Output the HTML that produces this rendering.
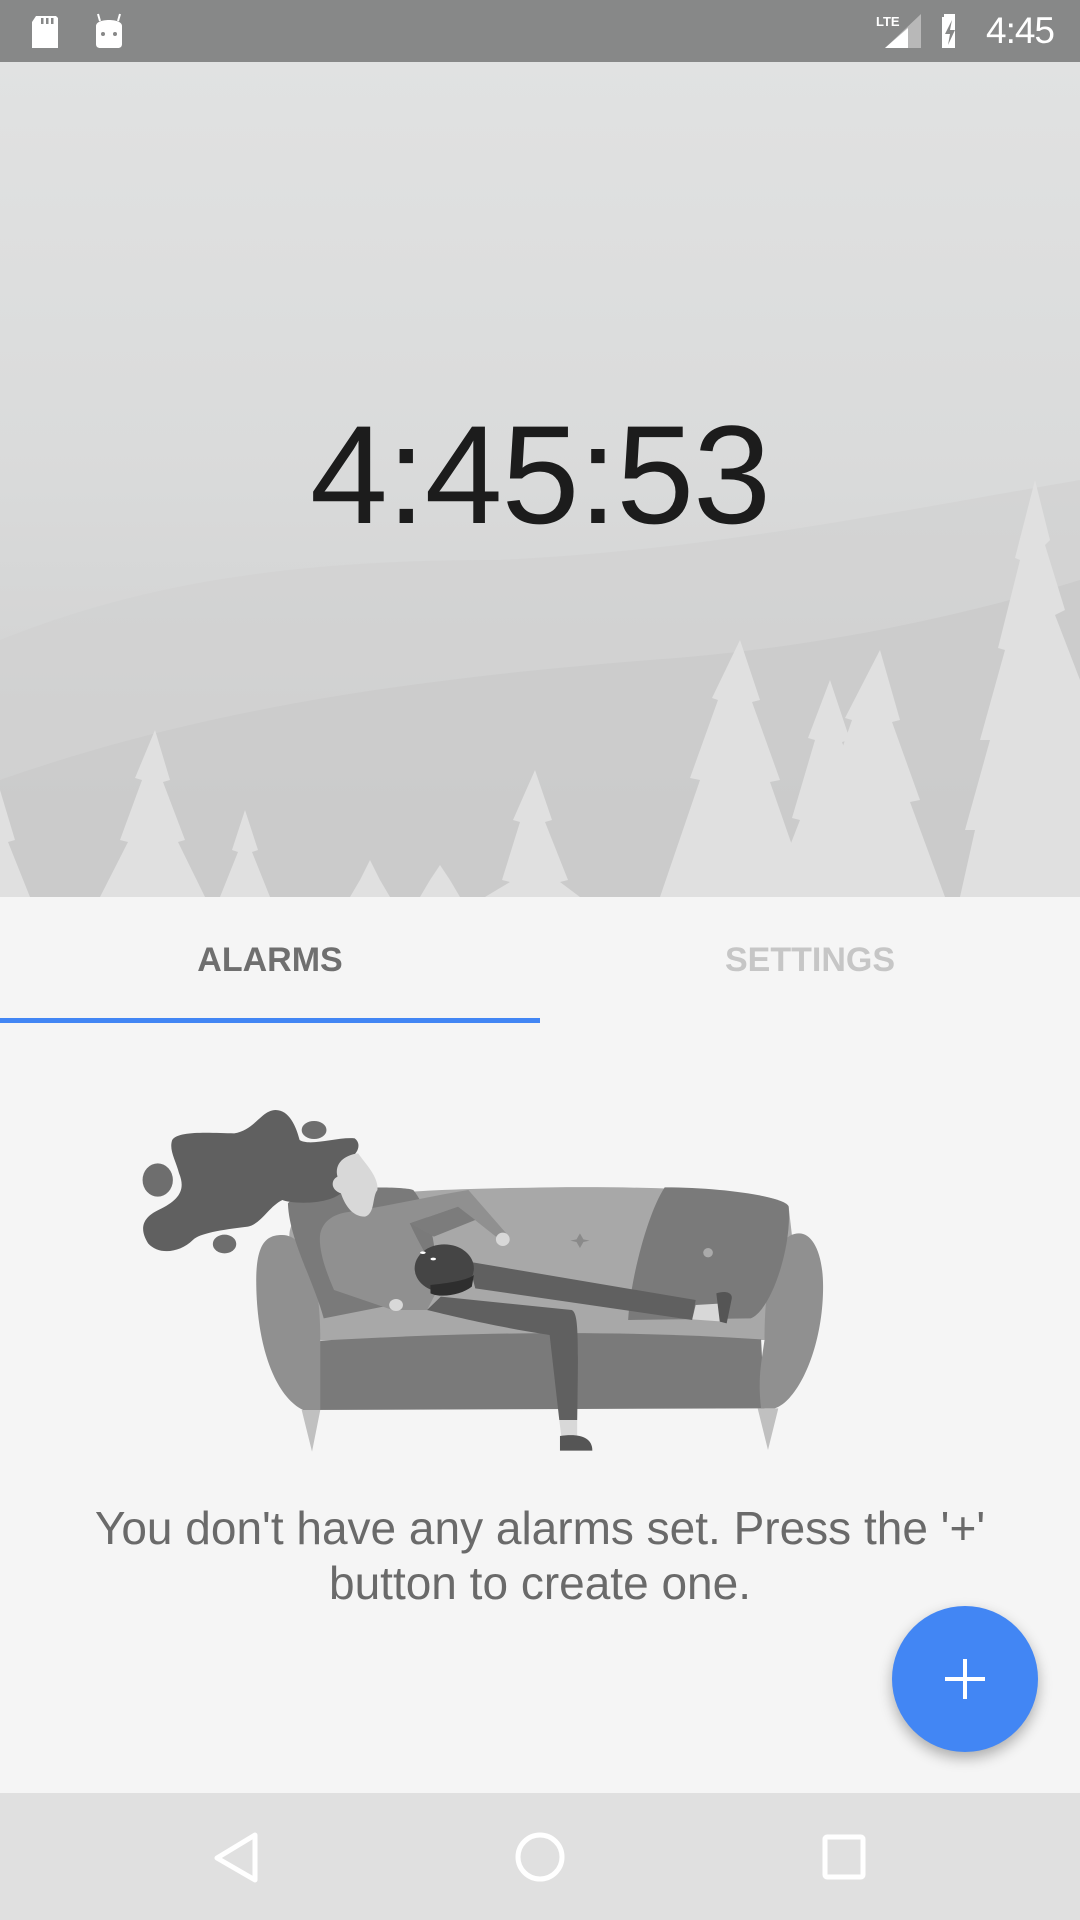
<!DOCTYPE html>
<html><head><meta charset="utf-8"><style>
*{margin:0;padding:0;box-sizing:border-box}
body{width:1080px;height:1920px;background:#f5f5f5;position:relative;overflow:hidden;font-family:"Liberation Sans",sans-serif}
.abs{position:absolute}
</style></head><body>
<svg class="abs" style="left:0;top:0" width="1080" height="897" viewBox="0 0 1080 897">
<defs>
<linearGradient id="sky" x1="0" y1="0" x2="0" y2="1">
<stop offset="0" stop-color="#e2e3e3"/><stop offset="0.5" stop-color="#dadbdb"/><stop offset="1" stop-color="#cdcdcd"/>
</linearGradient>
</defs>
<rect width="1080" height="897" fill="url(#sky)"/>
<path d="M0,640 C150,580 300,560 500,560 C700,550 850,520 1080,480 L1080,897 L0,897Z" fill="#d0d0d0" opacity="0.6"/>
<path d="M0,780 C200,710 400,680 650,660 C800,650 950,620 1080,580 L1080,897 L0,897Z" fill="#c8c8c8" opacity="0.6"/>
<g fill="#e0e0e0">
<polygon points="1035,480 1050,540 1045,545 1065,610 1055,615 1080,680 1080,897 960,897 975,830 965,830 990,740 980,740 1005,650 998,648 1020,560 1015,558"/>
<polygon points="880,650 900,720 892,722 920,800 910,802 945,897 800,897 835,800 825,798 852,720 845,718"/>
<polygon points="740,640 760,700 752,702 780,780 770,782 810,897 660,897 700,780 690,778 718,700 712,698"/>
<polygon points="830,680 850,740 842,742 870,820 860,822 890,897 770,897 800,820 792,818 815,740 808,738"/>
<polygon points="155,730 170,780 163,782 185,840 178,842 205,897 100,897 128,842 120,840 142,780 135,778"/>
<polygon points="245,810 258,850 252,852 270,897 220,897 238,852 232,850"/>
<polygon points="535,770 552,820 545,822 568,880 560,882 580,897 485,897 510,882 502,880 520,822 513,820"/>
<polygon points="370,860 380,880 390,897 350,897 360,880"/>
<polygon points="440,865 450,880 460,897 420,897 430,880"/>
<polygon points="0,790 15,840 8,842 30,897 0,897"/>
</g>
</svg>
<div class="abs" style="left:0;top:0;width:1080px;height:62px;background:#878888"></div>
<svg class="abs" style="left:30px;top:12px" width="110" height="40" viewBox="0 0 110 40">
<path d="M6,4 L26,4 L28,6 L28,36 L2,36 L2,10 Z" fill="#fff"/>
<rect x="11" y="6" width="2.5" height="6" fill="#878888"/><rect x="16" y="6" width="2.5" height="6" fill="#878888"/><rect x="21" y="6" width="2.5" height="6" fill="#878888"/>
<path d="M66,14 C66,10 72,8 79,8 C86,8 92,10 92,14 L92,32 C92,35 90,36 88,36 L70,36 C68,36 66,35 66,32Z" fill="#fff"/>
<line x1="70" y1="9" x2="68" y2="2" stroke="#fff" stroke-width="2"/><line x1="88" y1="9" x2="90" y2="2" stroke="#fff" stroke-width="2"/>
<circle cx="73" cy="22" r="2" fill="#878888"/><circle cx="85" cy="22" r="2" fill="#878888"/>
</svg>
<svg class="abs" style="left:875px;top:10px" width="80" height="45" viewBox="0 0 80 45">
<polygon points="46,4 46,38 10,38" fill="#b8b8b8"/>
<polygon points="33,18 33,38 10,38" fill="#fff"/>
<text x="1" y="16" font-family="Liberation Sans" font-size="13" font-weight="bold" fill="#fff">LTE</text>
<rect x="69" y="4" width="11" height="4" fill="#fff"/>
<rect x="67" y="7" width="18" height="31" fill="#fff"/>
<polygon points="77,10 70,24 75,24 73,35 80,20 75,20" fill="#878888"/>
</svg>
<div class="abs" style="left:986px;top:10px;color:#fff;font-size:37px;letter-spacing:-1px">4:45</div>
<div class="abs" style="left:0;top:390px;width:1080px;text-align:center;font-size:140px;color:#1c1c1c;letter-spacing:-1px;line-height:170px">4:45:53</div>
<div class="abs" style="left:0;top:941px;width:540px;text-align:center;font-size:34px;font-weight:bold;color:#6f6f6f">ALARMS</div>
<div class="abs" style="left:540px;top:941px;width:540px;text-align:center;font-size:34px;font-weight:bold;color:#c6c6c6">SETTINGS</div>
<div class="abs" style="left:0;top:1018px;width:540px;height:5px;background:#4286f4"></div>
<svg class="abs" style="left:0;top:1080px" width="1080" height="420" viewBox="0 0 1568 1260" preserveAspectRatio="none">
<path d="M438,990 L465,990 L453,1115 Z M1100,985 L1130,985 L1115,1110 Z" fill="#c0c0c0"/>
<path d="M420,470 C420,360 500,330 800,322 C1000,318 1140,340 1145,380 L1150,470 L1110,780 L465,780 Z" fill="#a8a8a8"/>
<path d="M465,782 C700,755 900,750 1105,778 L1110,985 L440,990 Z" fill="#7a7a7a"/>
<path d="M372,600 C372,480 390,465 410,465 C440,465 465,560 465,780 L465,990 L440,990 C400,950 372,800 372,600 Z" fill="#909090"/>
<path d="M1110,780 C1110,560 1130,460 1160,460 C1180,460 1195,520 1195,620 C1195,800 1160,960 1125,985 L1105,985 C1100,900 1105,850 1110,780 Z" fill="#909090"/>
<path d="M965,322 C1050,322 1140,350 1145,380 C1150,500 1120,690 1090,715 L912,720 C915,600 940,400 965,322 Z" fill="#7a7a7a"/>
<ellipse cx="1028" cy="518" rx="7" ry="14" fill="#aaa"/>
<path d="M842,460 L847,478 L856,482 L847,486 L842,504 L837,486 L828,482 L837,478 Z" fill="#8a8a8a"/>
<path d="M418,370 C440,320 580,315 600,330 C620,380 640,500 630,650 L470,715 C455,600 420,480 418,370 Z" fill="#7a7a7a"/>
<path d="M250,180 C260,150 310,160 340,160 C370,150 380,90 400,90 C420,90 430,140 435,180 C450,200 490,170 515,175 C525,190 520,220 510,230 L500,330 C480,380 420,370 410,360 C390,380 380,430 360,440 C320,450 290,460 280,480 C260,520 230,525 215,490 C200,440 210,410 230,390 C260,360 270,330 260,280 C255,240 245,210 250,180 Z" fill="#606060"/>
<ellipse cx="229" cy="300" rx="22" ry="50" fill="#6e6e6e"/>
<ellipse cx="456" cy="150" rx="18" ry="27" fill="#6e6e6e"/>
<ellipse cx="326" cy="492" rx="17" ry="28" fill="#6e6e6e"/>
<path d="M500,398 C560,380 620,350 680,330 L735,460 L720,470 L665,380 L595,430 C610,500 630,560 640,610 L620,690 L570,690 L485,630 C470,560 462,500 465,460 C470,420 485,405 500,398 Z" fill="#909090"/>
<path d="M595,430 L665,380 L690,420 L630,470 Z" fill="#7c7c7c"/>
<path d="M520,220 C530,250 550,290 548,330 C540,350 545,400 530,410 C510,410 500,370 495,340 C480,330 480,300 490,290 C485,250 500,225 520,220 Z" fill="#d8d8d8"/>
<ellipse cx="730" cy="478" rx="10" ry="20" fill="#d8d8d8"/>
<ellipse cx="575" cy="675" rx="10" ry="18" fill="#d8d8d8"/>
<path d="M680,545 L1010,660 L1005,720 L690,625 Z" fill="#606060"/>
<path d="M640,650 L830,690 C840,700 840,760 838,1020 L812,1020 L798,765 C720,740 660,710 620,690 Z" fill="#606060"/>
<path d="M812,1020 L838,1020 L838,1070 L815,1070 Z" fill="#d8d8d8"/>
<path d="M813,1068 C840,1060 860,1070 860,1112 L813,1112 Z" fill="#555"/>
<path d="M1010,675 L1050,670 L1050,725 L1005,718 Z" fill="#d8d8d8"/>
<path d="M1040,640 C1055,630 1065,640 1062,660 L1055,730 L1045,725 Z" fill="#555"/>
<ellipse cx="645" cy="565" rx="43" ry="72" fill="#454545"/>
<path d="M625,615 C650,610 680,600 688,585 L685,620 C670,645 640,655 625,640 Z" fill="#2e2e2e"/>
<circle cx="614" cy="518" r="4" fill="#fff"/><circle cx="629" cy="537" r="4" fill="#fff"/>
</svg>
<div class="abs" style="left:0;top:1501px;width:1080px;text-align:center;font-size:46px;line-height:55px;color:#6a6a6a">You don't have any alarms set. Press the '+'<br>button to create one.</div>
<div class="abs" style="left:892px;top:1606px;width:146px;height:146px;border-radius:50%;background:#4286f4;box-shadow:0 6px 14px rgba(0,0,0,0.3)"></div>
<div class="abs" style="left:945px;top:1677px;width:40px;height:4px;background:#fff"></div>
<div class="abs" style="left:963px;top:1659px;width:4px;height:40px;background:#fff"></div>
<div class="abs" style="left:0;top:1793px;width:1080px;height:127px;background:#e0e0e0"></div>
<svg class="abs" style="left:0;top:1793px" width="1080" height="127">
<path d="M255,42 L255,87 L217,65 Z" fill="none" stroke="#fff" stroke-width="5" stroke-linejoin="round"/>
<circle cx="540" cy="64" r="22" fill="none" stroke="#fff" stroke-width="5"/>
<rect x="825" y="44" width="38" height="40" rx="2" fill="none" stroke="#fff" stroke-width="5"/>
</svg>
</body></html>
